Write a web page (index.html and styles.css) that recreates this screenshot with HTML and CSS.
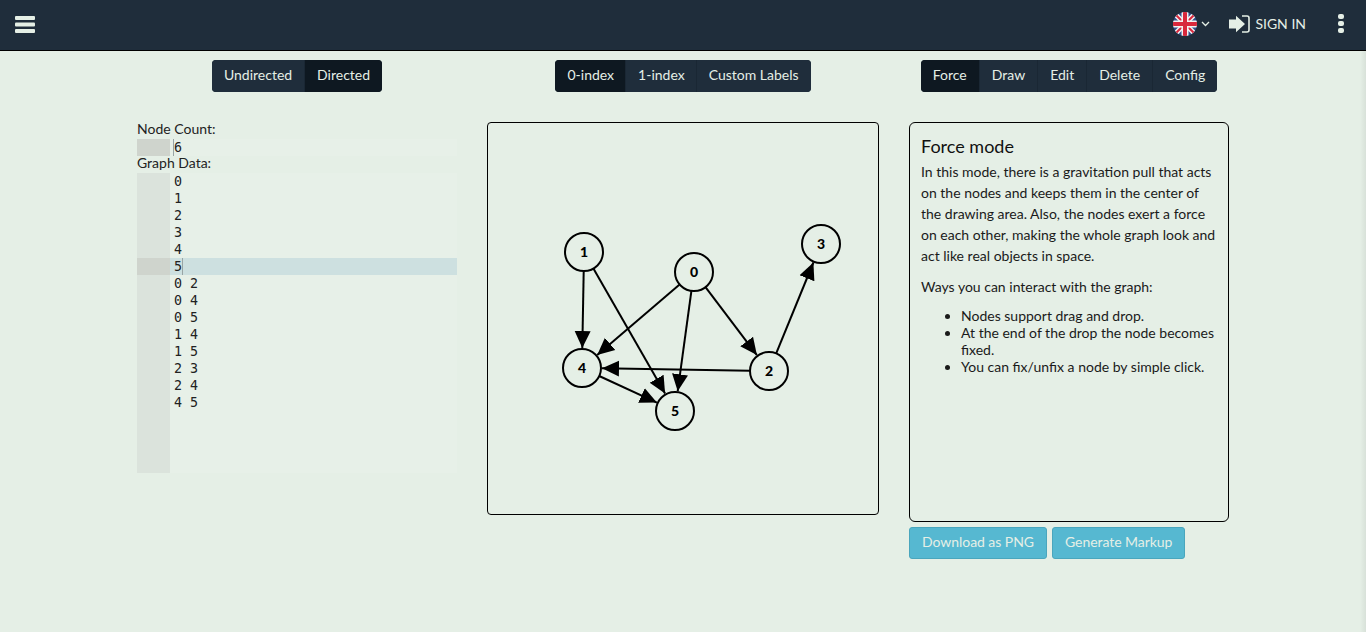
FILE: index.html
```html
<!DOCTYPE html>
<html lang="en">
<head>
  <meta charset="UTF-8">
  <meta name="viewport" content="width=device-width, initial-scale=1.0">
  <title>Graph Editor</title>
  <link rel="stylesheet" href="styles.css">
</head>
<body>
  <nav class="topbar">
    <a href="#" class="bars-btn" aria-label="Menu">
      <svg width="20" height="17" viewBox="0 0 20 17"><rect y="0" width="20" height="4" rx="1"/><rect y="6.5" width="20" height="4" rx="1"/><rect y="13" width="20" height="4" rx="1"/></svg>
    </a>
    <div class="topbar-right">
      <a href="#" class="lang">
        <svg class="flag" width="24" height="24" viewBox="0 0 24 24">
          <defs><clipPath id="flag-clip"><circle cx="12" cy="12" r="12"/></clipPath></defs>
          <g clip-path="url(#flag-clip)">
            <rect width="24" height="24" fill="#2f4f8c"/>
            <path d="M0 0 L24 24 M24 0 L0 24" stroke="#f2f2f2" stroke-width="5"/>
            <path d="M0 0 L24 24 M24 0 L0 24" stroke="#d8283c" stroke-width="2"/>
            <path d="M8.5 0 H15.5 V8.5 H24 V15.5 H15.5 V24 H8.5 V15.5 H0 V8.5 H8.5 Z" fill="#f2f2f2"/>
            <path d="M10 0 H14 V10 H24 V14 H14 V24 H10 V14 H0 V10 H10 Z" fill="#d8283c"/>
          </g>
        </svg>
        <svg class="chevron" width="9" height="6" viewBox="0 0 9 6"><path d="M1 1 L4.5 4.5 L8 1" fill="none" stroke="#e5efe6" stroke-width="1.3"/></svg>
      </a>
      <a href="#" class="sign-in">
        <svg width="21" height="18" viewBox="0 0 21 18">
          <path d="M0 4.5 H7 V0.8 L16 9 L7 17.2 V13.5 H0 Z" fill="#e5efe6"/>
          <path d="M13 1 H18 Q20 1 20 3 V15 Q20 17 18 17 H13" fill="none" stroke="#e5efe6" stroke-width="1.6"/>
        </svg>
        <span>SIGN IN</span>
      </a>
      <a href="#" class="dots" aria-label="More"><i></i><i></i><i></i></a>
    </div>
  </nav>

  <main class="page">
    <section class="col">
      <div class="btn-group">
        <a href="#" class="btn">Undirected</a>
        <a href="#" class="btn active">Directed</a>
      </div>
      <div class="col-body">
        <label class="field-label">Node Count:</label>
        <div class="editor">
          <div class="line active-gutter"><span class="gutter"></span><span class="code"><b class="cursor before"></b>6</span></div>
        </div>
        <label class="field-label">Graph Data:</label>
        <div class="editor tall">
          <div class="line"><span class="gutter"></span><span class="code">0</span></div>
          <div class="line"><span class="gutter"></span><span class="code">1</span></div>
          <div class="line"><span class="gutter"></span><span class="code">2</span></div>
          <div class="line"><span class="gutter"></span><span class="code">3</span></div>
          <div class="line"><span class="gutter"></span><span class="code">4</span></div>
          <div class="line current active-gutter"><span class="gutter"></span><span class="code">5<b class="cursor"></b></span></div>
          <div class="line"><span class="gutter"></span><span class="code">0 2</span></div>
          <div class="line"><span class="gutter"></span><span class="code">0 4</span></div>
          <div class="line"><span class="gutter"></span><span class="code">0 5</span></div>
          <div class="line"><span class="gutter"></span><span class="code">1 4</span></div>
          <div class="line"><span class="gutter"></span><span class="code">1 5</span></div>
          <div class="line"><span class="gutter"></span><span class="code">2 3</span></div>
          <div class="line"><span class="gutter"></span><span class="code">2 4</span></div>
          <div class="line"><span class="gutter"></span><span class="code">4 5</span></div>
        </div>
      </div>
    </section>

    <section class="col">
      <div class="btn-group compact">
        <a href="#" class="btn active">0-index</a>
        <a href="#" class="btn">1-index</a>
        <a href="#" class="btn">Custom Labels</a>
      </div>
      <div class="col-body">
        <div class="canvas">
          <svg class="graph" width="390" height="391" viewBox="0 0 390 391">
            <defs>
              <marker id="arrow" markerUnits="userSpaceOnUse" markerWidth="18" markerHeight="18" refX="17" refY="9" orient="auto">
                <path d="M0 1 L17 9 L0 17 Z"/>
              </marker>
            </defs>
            <g class="edges">
              <line x1="217.5" y1="164.1" x2="268.9" y2="232.1" marker-end="url(#arrow)"/>
              <line x1="191.6" y1="161.4" x2="109.2" y2="232" marker-end="url(#arrow)"/>
              <line x1="203.4" y1="167.8" x2="189.7" y2="268.2" marker-end="url(#arrow)"/>
              <line x1="95.7" y1="148" x2="94.3" y2="225" marker-end="url(#arrow)"/>
              <line x1="105.4" y1="145.5" x2="177.1" y2="270.6" marker-end="url(#arrow)"/>
              <line x1="288.2" y1="230.4" x2="325.4" y2="139.5" marker-end="url(#arrow)"/>
              <line x1="262" y1="247.7" x2="114" y2="245.3" marker-end="url(#arrow)"/>
              <line x1="111.2" y1="253" x2="168.9" y2="279.6" marker-end="url(#arrow)"/>
            </g>
            <g class="nodes">
              <circle cx="206" cy="149" r="19"/><text x="206" y="154">0</text>
              <circle cx="96" cy="129" r="19"/><text x="96" y="134">1</text>
              <circle cx="281" cy="248" r="19"/><text x="281" y="253">2</text>
              <circle cx="333" cy="121" r="19"/><text x="333" y="126">3</text>
              <circle cx="94" cy="245" r="19"/><text x="94" y="250">4</text>
              <circle cx="187" cy="288" r="19"/><text x="187" y="293">5</text>
            </g>
          </svg>
        </div>
      </div>
    </section>

    <section class="col">
      <div class="btn-group">
        <a href="#" class="btn active">Force</a>
        <a href="#" class="btn">Draw</a>
        <a href="#" class="btn">Edit</a>
        <a href="#" class="btn">Delete</a>
        <a href="#" class="btn">Config</a>
      </div>
      <div class="col-body">
        <div class="help">
          <h4>Force mode</h4>
          <p>In this mode, there is a gravitation pull that acts on the nodes and keeps them in the center of the drawing area. Also, the nodes exert a force on each other, making the whole graph look and act like real objects in space.</p>
          <p>Ways you can interact with the graph:</p>
          <ul>
            <li>Nodes support drag and drop.</li>
            <li>At the end of the drop the node becomes fixed.</li>
            <li>You can fix/unfix a node by simple click.</li>
          </ul>
        </div>
        <div class="actions">
          <a href="#" class="btn-info">Download as PNG</a>
          <a href="#" class="btn-info">Generate Markup</a>
        </div>
      </div>
    </section>
  </main>
</body>
</html>
```

FILE: styles.css
```css
* {
  box-sizing: border-box;
}
html, body {
  margin: 0;
  height: 100%;
}
body {
  background: #e5efe6;
  color: #111;
  font: 14px/20px Lato, "Liberation Sans", sans-serif;
  overflow: hidden;
}
/* faint shadow down the right edge, under the top bar */
body::after {
  content: "";
  position: absolute;
  top: 51px;
  right: 0;
  bottom: 0;
  width: 6px;
  background: linear-gradient(to right, rgba(0, 0, 0, 0), rgba(0, 0, 0, .06));
}
a {
  text-decoration: none;
  color: inherit;
}

/* top bar */
.topbar {
  height: 51px;
  background: #1f2d3b;
  border-bottom: 1px solid #000;
  display: flex;
  align-items: center;
  justify-content: space-between;
  padding: 0 22px 1px 15px;
  color: #e5efe6;
}
.bars-btn {
  display: flex;
}
.bars-btn svg {
  fill: #e5efe6;
}
.topbar-right {
  display: flex;
  align-items: center;
  margin-bottom: 2px;
}
.lang {
  display: flex;
  align-items: center;
  gap: 4px;
}
.flag {
  display: block;
}
.sign-in {
  display: flex;
  align-items: center;
  gap: 5px;
  margin-left: 19px;
}
.dots {
  display: flex;
  flex-direction: column;
  gap: 2px;
  margin-left: 32px;
}
.dots i {
  display: block;
  width: 6px;
  height: 5px;
  border-radius: 2px;
  background: #e5efe6;
}

/* three columns */
.page {
  display: grid;
  grid-template-columns: 320px 392px 320px;
  gap: 30px;
  justify-content: center;
  padding-top: 9px;
}
.col {
  display: flex;
  flex-direction: column;
  align-items: center;
}
.col-body {
  width: 100%;
  margin-top: 30px;
}

.btn-group {
  display: inline-flex;
  height: 32px;
  border-radius: 4px;
  overflow: hidden;
  background: #1f2d3b;
}
.btn {
  padding: 5px 12px 7px;
  color: #e5efe6;
  background: #1f2d3b;
  border-right: 1px solid #1a2734;
}
.btn:last-child {
  border-right: 0;
}
.btn.active {
  background: #0e1821;
}
.compact .btn {
  border-right: 0;
  box-shadow: inset -1px 0 #1a2734;
}
.compact .btn:last-child {
  box-shadow: none;
}

/* code editors */
.field-label {
  display: block;
  height: 17px;
  line-height: 14px;
  color: #222;
}
.editor {
  font: 13.33px/17px "DejaVu Sans Mono", monospace;
  color: #222;
  background: #e7f0e8;
}
.editor.tall {
  height: 300px;
  background: linear-gradient(to right, #dbe3dc 33px, #e7f0e8 33px);
}
.line {
  display: flex;
  height: 17px;
}
.gutter {
  width: 33px;
  flex: none;
}
.active-gutter .gutter {
  background: #cfd4cd;
}
.line.current {
  background: #cde0e0;
}
.code {
  padding-left: 4px;
  display: flex;
}
.cursor {
  width: 1px;
  height: 17px;
  background: #99a5a5;
}
.cursor.before {
  margin-left: -1px;
}

/* graph */
.canvas {
  height: 393px;
  border: 1px solid #000;
  border-radius: 4px;
}
.graph {
  display: block;
}
.edges line {
  stroke: #000;
  stroke-width: 2;
}
.nodes circle {
  fill: #e5efe6;
  stroke: #000;
  stroke-width: 2;
}
.nodes text {
  font: 900 14px Lato, sans-serif;
  text-anchor: middle;
  fill: #000;
}

/* help panel */
.help {
  height: 400px;
  border: 1px solid #000;
  border-radius: 6px;
  padding: 11px;
  line-height: 21px;
  color: #1a1a1a;
}
.help h4 {
  margin: 0 0 2px;
  font-size: 18px;
  font-weight: 400;
  line-height: 25px;
  color: #111;
}
.help p {
  margin: 0 0 10px;
}
.help ul {
  margin: 0;
  padding-left: 40px;
  line-height: 17px;
}
.actions {
  display: flex;
  gap: 5px;
  margin-top: 5px;
}
.btn-info {
  height: 32px;
  padding: 4px 12px;
  background: #56b8d1;
  border: 1px solid #4aa6bd;
  border-radius: 3px;
  color: #e5efe6;
  letter-spacing: -0.05px;
}
```
